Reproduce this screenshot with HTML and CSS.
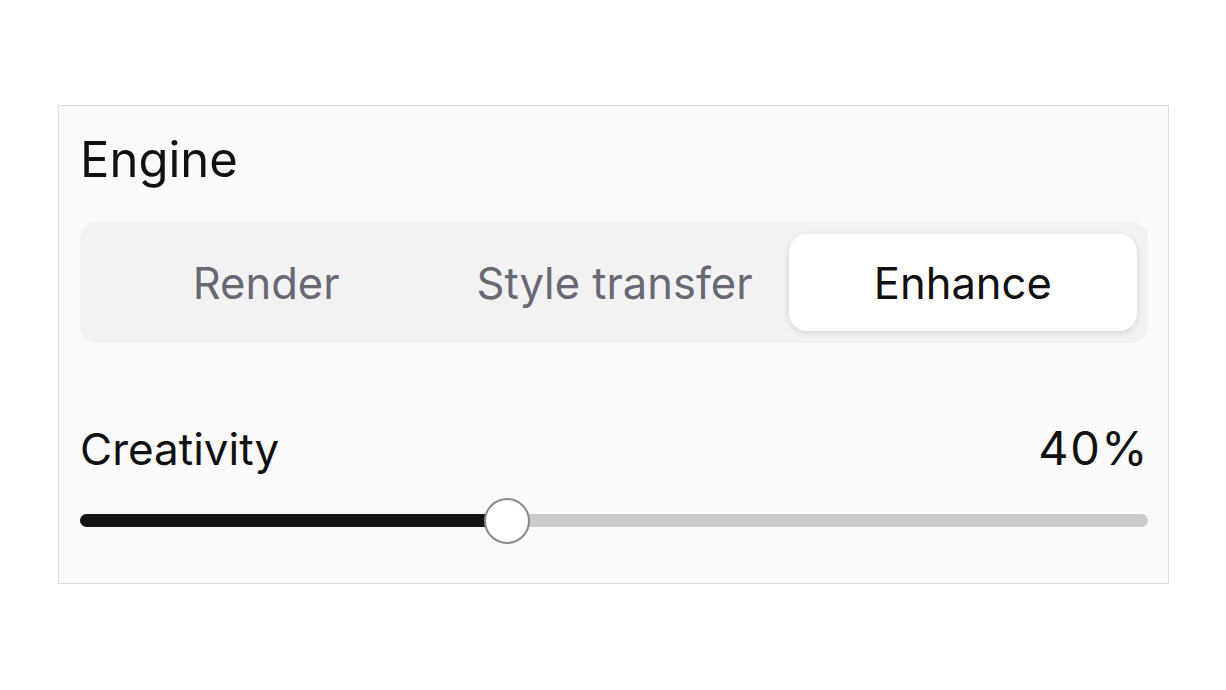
FILE: index.html
```html
<!DOCTYPE html>
<html lang="en">

<head>
    <meta charset="UTF-8">
    <meta name="viewport" content="width=device-width, initial-scale=1.0">
    <title>Engine settings</title>
    <link rel="stylesheet" href="styles.css">
</head>

<body>
    <div class="panel">
        <h2 class="title">Engine</h2>
        <div class="segmented">
            <button class="segment">Render</button>
            <button class="segment">Style transfer</button>
            <button class="segment active">Enhance</button>
        </div>

        <div class="sliderHead">
            <span class="sliderLabel">Creativity</span>
            <span class="sliderValue">40%</span>
        </div>
        <div class="track">
            <div class="fill" style="width: 40%"></div>
            <div class="thumb" style="left: 40%"></div>
        </div>
    </div>
</body>

</html>
```

FILE: styles.css
```css
* {
    margin: 0px;
    padding: 0px;
    box-sizing: border-box;
}

body {
    background-color: white;
    font-family: Inter, "Noto Sans", sans-serif;
    color: #111;
}

.panel {
    margin: 105px 0 0 58px;
    width: 1111px;
    background-color: #fafafa;
    border: 1px solid #dcdcdc;
    padding: 24px 20px 56px 21px;
}

.title {
    font-size: 49px;
    font-weight: 400;
    line-height: 1.21;
    color: #111;
}

.segmented {
    margin-top: 33px;
    display: flex;
    padding: 12px 11px 12px 12px;
    background-color: #f2f2f4;
    border-radius: 16px;
}

.segment {
    flex: 1;
    height: 97px;
    border: none;
    background: none;
    font-family: inherit;
    font-size: 43.5px;
    color: #686874;
    border-radius: 18px;
    cursor: pointer;
}

.segment.active {
    background-color: white;
    color: #111;
    box-shadow: 0 2px 6px rgba(0, 0, 0, 0.12);
}

.sliderHead {
    margin-top: 77px;
    display: flex;
    justify-content: space-between;
    align-items: baseline;
    font-size: 44px;
    line-height: 1.21;
}

.sliderValue {
    font-size: 47px;
    letter-spacing: 1.5px;
    margin-right: -1px;
}

.track {
    position: relative;
    margin-top: 37px;
    height: 13px;
    border-radius: 7px;
    background-color: #cbcbcb;
}

.fill {
    height: 100%;
    border-radius: 7px;
    background-color: #141414;
}

.thumb {
    position: absolute;
    top: 50%;
    width: 46px;
    height: 46px;
    margin: -23px 0 0 -23px;
    border-radius: 50%;
    background-color: white;
    border: 2px solid #8a8a8a;
}
```
